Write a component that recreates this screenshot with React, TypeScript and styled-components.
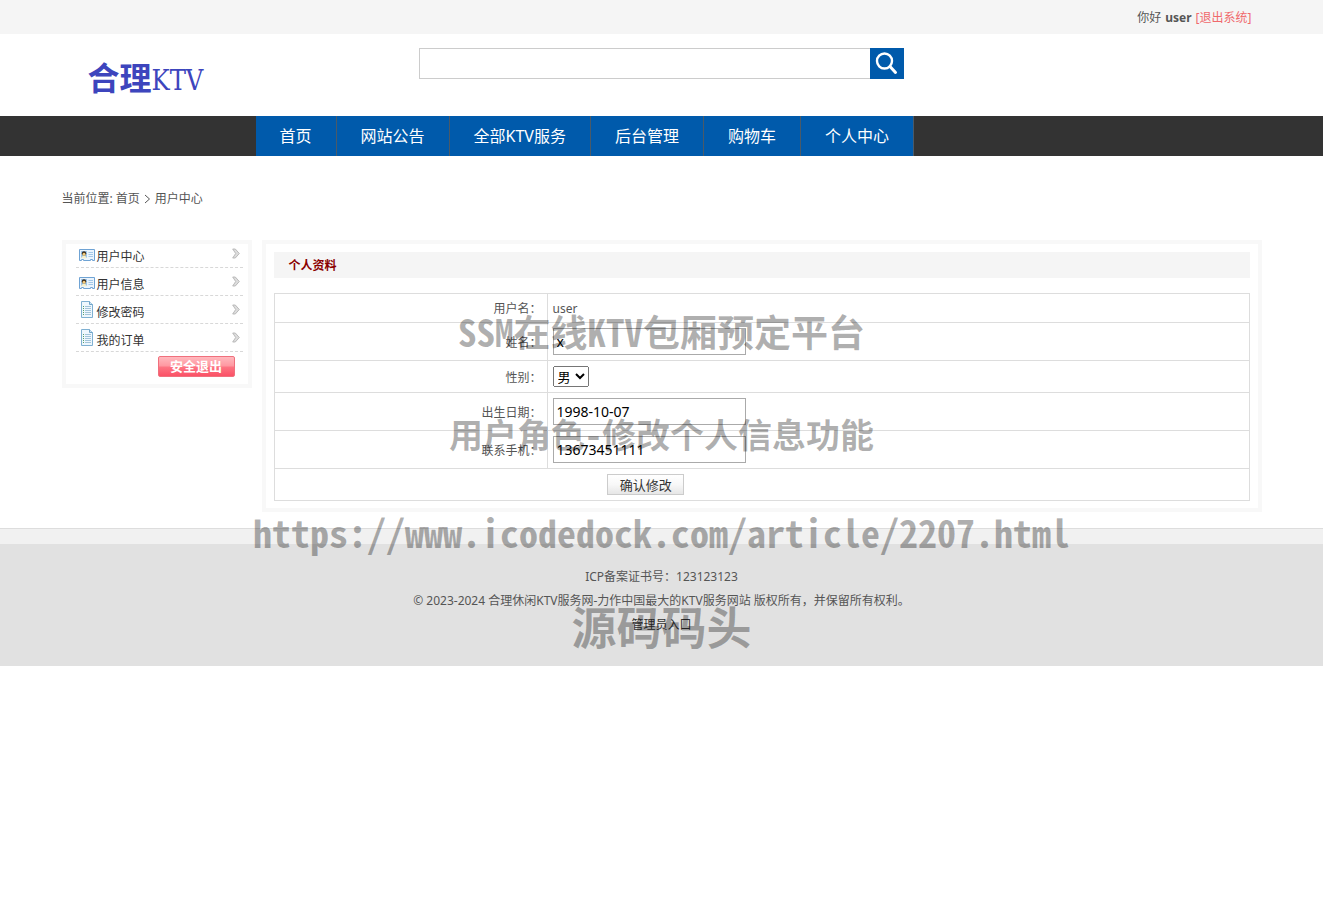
import React from 'react';
import styled, { createGlobalStyle } from 'styled-components';

const GlobalStyle = createGlobalStyle`
  * { box-sizing: border-box; }
  body {
    margin: 0;
    background: #fff;
    color: #555;
    font: 12px/24px "Noto Sans", "Noto Sans CJK SC", sans-serif;
  }
  a { color: inherit; text-decoration: none; }
  ul { list-style: none; margin: 0; padding: 0; }
  input, select, button { font-family: inherit; }
`;

const Page = styled.div`
  position: relative;
`;

const Container = styled.div`
  width: 100%;
  max-width: 1200px;
  margin: 0 auto;
`;

const TopBar = styled.div`
  background: #f5f5f5;
`;

const Greeting = styled(Container)`
  display: flex;
  justify-content: flex-end;
  gap: 4px;
  padding: 2px 10px 0;
  line-height: 32px;
`;

const LogoutLink = styled.a`
  color: #f0696c;
`;

const Header = styled(Container)`
  display: flex;
  align-items: flex-start;
  height: 82px;
`;

const Logo = styled.a`
  display: flex;
  align-items: baseline;
  width: 357px;
  padding: 24px 0 0 26px;
  color: #3d45bd;
  font-size: 32px;
  font-weight: 700;
  line-height: 40px;
`;

const LogoLatin = styled.span`
  font: 27px/40px "DejaVu Serif Condensed", "Liberation Serif", serif;
`;

const SearchForm = styled.form`
  display: flex;
  width: 485px;
  height: 31px;
  margin-top: 14px;
`;

const SearchInput = styled.input`
  flex: 1;
  min-width: 0;
  padding: 0 8px;
  border: 1px solid #ccc;
  border-right: 0;
  font-size: 14px;
  outline: 0;
`;

const SearchButton = styled.button`
  width: 34px;
  padding: 0;
  border: 0;
  background: #005aab;
  color: #fff;
  svg { display: block; margin: 0 auto; }
`;

const NavBar = styled.nav`
  background: #333;
`;

const NavList = styled.ul`
  display: flex;
  width: 100%;
  max-width: 1200px;
  margin: 0 auto !important;
  padding-left: 194px !important;
`;

const NavLink = styled.a`
  display: block;
  padding: 0 24px;
  border-right: 1px solid #4a5a68;
  background: #005aab;
  color: #fff;
  font-size: 16px;
  line-height: 40px;
`;

const Breadcrumb = styled(Container)`
  display: flex;
  align-items: center;
  gap: 4px;
  padding: 31px 0 29px;
`;

const Columns = styled(Container)`
  display: flex;
  align-items: flex-start;
  gap: 10px;
  margin-bottom: 16px;
`;

const SideMenu = styled.aside`
  flex: 0 0 190px;
  padding: 0 5px 7px 10px;
  border: 4px solid #f8f8f8;
`;

const MenuItem = styled.li`
  display: flex;
  align-items: flex-end;
  height: 28px;
  border-bottom: 1px dashed #d8d8d8;
  color: #333;
  &:first-child { height: 24px; }
`;

const MenuLink = styled.a`
  display: flex;
  flex: 1;
  align-items: flex-start;
  gap: 2px;
  height: 22px;
  padding-left: 3px;
`;

const IconSlot = styled.span<{ $drop: number }>`
  display: flex;
  padding-top: ${(p) => p.$drop}px;
`;

const ExitButton = styled.button`
  display: block;
  width: 77px;
  height: 21px;
  margin: 4px 8px 0 auto;
  padding: 0;
  border: 1px solid #f0707d;
  border-radius: 2px;
  background: linear-gradient(#ffb9be, #ff97a0 48%, #fd7583 52%, #fb5166);
  color: #fff;
  font-size: 13px;
  font-weight: 700;
  line-height: 19px;
`;

const Panel = styled.main`
  flex: 1;
  min-width: 0;
  padding: 8px 8px 7px;
  border: 4px solid #f8f8f8;
`;

const PanelTitle = styled.h1`
  margin: 0 0 15px;
  padding: 2px 0 0 15px;
  background: #f5f5f5;
  color: #8b0000;
  font-size: 12px;
  line-height: 24px;
`;

const ProfileTable = styled.table`
  width: 100%;
  border-collapse: collapse;
  table-layout: fixed;
`;

const LabelCell = styled.th`
  width: 28%;
  padding: 2px 5px 0 0;
  border: 1px solid #ddd;
  font-weight: 400;
  text-align: right;
`;

const ValueCell = styled.td`
  padding: 5px;
  border: 1px solid #ddd;
`;

const TextCell = styled(ValueCell)`
  padding: 3px 5px 1px;
`;

const SubmitCell = styled.td`
  padding: 5px 0;
  border: 1px solid #ddd;
`;

const TextInput = styled.input`
  display: block;
  width: 193px;
  height: 27px;
  padding: 0 3px;
  border: 1px solid #aaa;
  background: #fff;
  color: #000;
  font-size: 14px;
`;

const GenderSelect = styled.select`
  display: block;
  height: 21px;
  color: #000;
  font-size: 13px;
`;

const SubmitButton = styled.button`
  display: block;
  width: 77px;
  height: 21px;
  margin-left: calc(28% + 60px);
  padding: 1px 0 0;
  border: 1px solid #ccc;
  background: linear-gradient(#fff, #f8f8f8 50%, #e6e6e6);
  color: #333;
  font-size: 13px;
  line-height: 18px;
`;

const FooterStrip = styled.div`
  height: 16px;
  border-top: 1px solid #ddd;
  background: #f1f1f1;
`;

const Footer = styled.footer`
  padding: 21px 0 29px;
  background: #e1e1e1;
  text-align: center;
  p { margin: 0; }
`;

const AdminLink = styled.a`
  color: #333;
`;

const Watermark = styled.div`
  position: absolute;
  inset: 0;
  pointer-events: none;
`;

const WatermarkLine = styled.div<{ $top: number; $size: number }>`
  position: absolute;
  top: ${(p) => p.$top}px;
  left: 0;
  right: 0;
  color: rgba(0, 0, 0, 0.31);
  font: 700 ${(p) => p.$size}px/50px "Noto Sans Mono CJK SC", "Noto Sans CJK SC", monospace;
  text-align: center;
  white-space: nowrap;
`;

const SearchIcon = () => (
  <svg width="26" height="26" viewBox="0 0 26 26" fill="none" stroke="currentColor">
    <circle cx="10.500" cy="10" r="7.500" strokeWidth="2.400" />
    <path d="M16 15.500 21.500 21.500" strokeWidth="3" strokeLinecap="round" />
  </svg>
);

const CardIcon = () => (
  <svg width="16" height="13" viewBox="0 0 16 13">
    <path d="M.5.5h15v11h-2v-1h-2v1h-7v-1h-2v1h-2z" fill="#eaf4fd" stroke="#6fa3d4" />
    <rect x="2" y="2" width="6" height="7" fill="#9cc6ec" />
    <circle cx="5" cy="4.400" r="2.200" fill="#3b2a18" />
    <circle cx="5" cy="5.200" r="1.500" fill="#f4cd7e" />
    <path d="M2.200 9.200c.3-1.700 1.500-2.200 2.800-2.200s2.500.5 2.800 2.200z" fill="#f8efc8" />
    <path d="M9.500 3.500h4.500M9.500 5.500h4.500M9.500 7.500h4.500" stroke="#a3c8e8" />
  </svg>
);

const PageIcon = () => (
  <svg width="16" height="17" viewBox="0 0 16 17">
    <path d="M2.500.5h8l3 3v13h-11z" fill="#eef7fd" stroke="#7fb0d2" />
    <path d="M10.500.5v3h3" fill="#cfe5f4" stroke="#6fa3c8" />
    <path d="M6 5.500h6M6 7.500h6M6 9.500h6M6 11.500h6M6 13.500h6" stroke="#a3c4da" />
    <path d="M4 5.500h1M4 7.500h1M4 9.500h1M4 11.500h1M4 13.500h1" stroke="#57a06a" />
  </svg>
);

const ArrowIcon = () => (
  <svg width="8" height="12" viewBox="0 0 8 12">
    <path d="M.7 1h2.600L7.300 5.500 3.300 10H.7L3.700 5.500z" fill="#ddd" stroke="#b4b4b4" strokeWidth=".9" />
  </svg>
);

const CrumbIcon = () => (
  <svg width="7" height="10" viewBox="0 0 7 10" fill="none" stroke="#555">
    <path d="M1 1l4.500 4L1 9" />
  </svg>
);

const ArrowSlot = styled.span`
  display: flex;
  padding: 0 3px 7px 0;
`;

const navItems = ['首页', '网站公告', '全部KTV服务', '后台管理', '购物车', '个人中心'];

const menuItems = [
  { label: '用户中心', Icon: CardIcon, drop: 4 },
  { label: '用户信息', Icon: CardIcon, drop: 4 },
  { label: '修改密码', Icon: PageIcon, drop: 0 },
  { label: '我的订单', Icon: PageIcon, drop: 0 },
];

const watermarkLines = [
  { text: 'SSM在线KTV包厢预定平台', top: 306, size: 37 },
  { text: '用户角色-修改个人信息功能', top: 409, size: 34 },
  { text: 'https://www.icodedock.com/article/2207.html', top: 507, size: 38 },
  { text: '源码码头', top: 601, size: 45 },
];

export default function App() {
  return (
    <Page>
      <GlobalStyle />
      <TopBar>
        <Greeting>
          <span>你好</span>
          <strong>user</strong>
          <LogoutLink href="#logout">[退出系统]</LogoutLink>
        </Greeting>
      </TopBar>
      <Header as="header">
        <Logo href="#home">
          合理<LogoLatin>KTV</LogoLatin>
        </Logo>
        <SearchForm>
          <SearchInput type="text" aria-label="搜索" />
          <SearchButton type="button" aria-label="搜索">
            <SearchIcon />
          </SearchButton>
        </SearchForm>
      </Header>
      <NavBar>
        <NavList>
          {navItems.map((item) => (
            <li key={item}>
              <NavLink href="#nav">{item}</NavLink>
            </li>
          ))}
        </NavList>
      </NavBar>
      <Breadcrumb>
        <span>当前位置: <a href="#home">首页</a></span>
        <CrumbIcon />
        <span>用户中心</span>
      </Breadcrumb>
      <Columns>
        <SideMenu>
          <ul>
            {menuItems.map(({ label, Icon, drop }) => (
              <MenuItem key={label}>
                <MenuLink href="#menu">
                  <IconSlot $drop={drop}>
                    <Icon />
                  </IconSlot>
                  {label}
                </MenuLink>
                <ArrowSlot>
                  <ArrowIcon />
                </ArrowSlot>
              </MenuItem>
            ))}
          </ul>
          <ExitButton type="button">安全退出</ExitButton>
        </SideMenu>
        <Panel>
          <PanelTitle>个人资料</PanelTitle>
          <ProfileTable>
            <tbody>
              <tr>
                <LabelCell scope="row">用户名：</LabelCell>
                <TextCell>user</TextCell>
              </tr>
              <tr>
                <LabelCell scope="row"><label htmlFor="name">姓名：</label></LabelCell>
                <ValueCell><TextInput id="name" type="text" defaultValue="x" /></ValueCell>
              </tr>
              <tr>
                <LabelCell scope="row"><label htmlFor="gender">性别：</label></LabelCell>
                <ValueCell>
                  <GenderSelect id="gender" defaultValue="男">
                    <option>男</option>
                    <option>女</option>
                  </GenderSelect>
                </ValueCell>
              </tr>
              <tr>
                <LabelCell scope="row"><label htmlFor="birth">出生日期：</label></LabelCell>
                <ValueCell><TextInput id="birth" type="text" defaultValue="1998-10-07" /></ValueCell>
              </tr>
              <tr>
                <LabelCell scope="row"><label htmlFor="phone">联系手机：</label></LabelCell>
                <ValueCell><TextInput id="phone" type="text" defaultValue="13673451111" /></ValueCell>
              </tr>
              <tr>
                <SubmitCell colSpan={2}><SubmitButton type="button">确认修改</SubmitButton></SubmitCell>
              </tr>
            </tbody>
          </ProfileTable>
        </Panel>
      </Columns>
      <FooterStrip />
      <Footer>
        <p>ICP备案证书号：123123123</p>
        <p>© 2023-2024 合理休闲KTV服务网-力作中国最大的KTV服务网站 版权所有，并保留所有权利。</p>
        <p><AdminLink href="#admin">管理员入口</AdminLink></p>
      </Footer>
      <Watermark aria-hidden="true">
        {watermarkLines.map((line) => (
          <WatermarkLine key={line.text} $top={line.top} $size={line.size}>{line.text}</WatermarkLine>
        ))}
      </Watermark>
    </Page>
  );
}
